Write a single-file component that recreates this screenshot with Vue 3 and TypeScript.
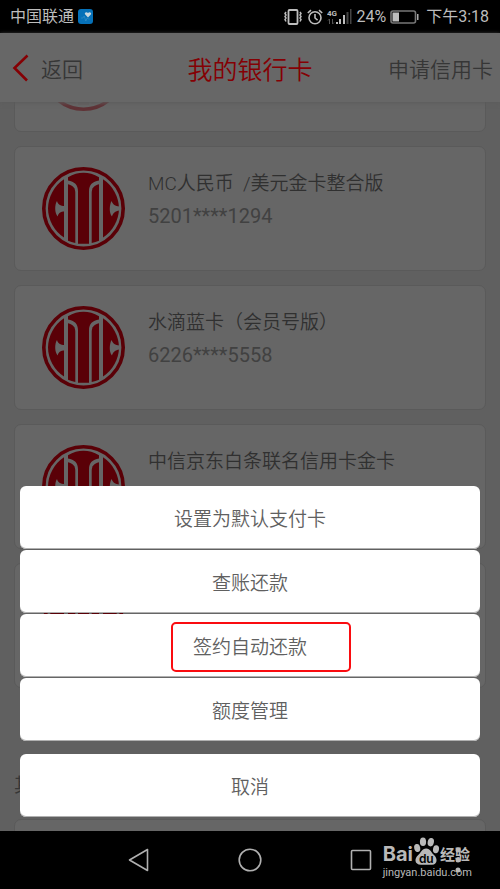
<script setup lang="ts">
interface BankCard {
  id: number
  name: string
  number: string
  faded?: boolean
}

const cards: BankCard[] = [
  { id: 1, name: '', number: '', faded: true },
  { id: 2, name: 'MC人民币  /美元金卡整合版', number: '5201****1294' },
  { id: 3, name: '水滴蓝卡（会员号版）', number: '6226****5558' },
  { id: 4, name: '中信京东白条联名信用卡金卡', number: '' },
  { id: 5, name: '', number: '' },
]

const actions: string[] = ['设置为默认支付卡', '查账还款', '签约自动还款', '额度管理']
const highlighted = '签约自动还款'
</script>

<template>
  <div class="phone">
    <div class="status">
      <span class="carrier">中国联通</span>
      <svg class="health" width="15" height="15" viewBox="0 0 15 15" aria-hidden="true">
        <rect width="15" height="15" rx="3" fill="#0671b8" />
        <path d="M10 8.400 7.200 5.600C5.800 3.800 8.400 2.200 10 4c1.500-1.800 4.100-.2 2.800 1.600Z" fill="#c9d8e0" />
        <path d="M3 9h2l1.200-2 1.600 5 1.400-3 1 1h1.500" fill="none" stroke="#3c93c8" stroke-width=".6" />
      </svg>
      <div class="indicators">
        <svg width="20" height="16" viewBox="0 0 20 16" fill="none" stroke="#bdbdbd" aria-hidden="true">
          <rect x="5.500" y="1" width="9" height="14" rx="1" stroke-width="1.800" />
          <path d="M3 3 2 4.500 3 6 2 7.500 3 9 2 10.500 3 12.500M17 3l1 1.500L17 6l1 1.500L17 9l1 1.500-1 2" stroke-width="1.500" />
        </svg>
        <svg class="alarm" width="16" height="16" viewBox="0 0 16 16" fill="none" stroke="#bdbdbd" stroke-width="1.600" aria-hidden="true">
          <circle cx="8" cy="8.800" r="6" />
          <path d="M8 5v4l2.600 2.200M.8 4 4 1.200M15.200 4 12 1.200" />
        </svg>
        <svg class="signal" width="25" height="17" viewBox="0 0 25 17" aria-hidden="true">
          <text x="0" y="8" font-family="Roboto, sans-serif" font-size="8" font-weight="700" fill="#bdbdbd">4G</text>
          <path d="M2.500 11v5M1 12.500 2.500 11M5.500 11v5L7 14.500" fill="none" stroke="#555" />
          <path d="M9 14h2v2H9zM12 11h2v5h-2zM16 7h2v9h-2z" fill="#bdbdbd" />
          <path d="M19.500 4h2v12h-2zM23 1h1.500v15H23z" fill="#444" />
        </svg>
        <span class="percent">24%</span>
        <svg class="battery" width="29" height="14" viewBox="0 0 29 14" aria-hidden="true">
          <rect x="1" y="1" width="24.500" height="12" rx="2" fill="none" stroke="#777" stroke-width="1.600" />
          <rect x="2.500" y="2.500" width="6.500" height="9" fill="#bdbdbd" />
          <path d="M27 4h1.500v6H27z" fill="#aaa" />
        </svg>
        <span class="time">下午3:18</span>
      </div>
    </div>

    <main class="screen">
      <header class="header">
        <a class="back" href="#">
          <svg width="17" height="28" viewBox="0 0 17 28" aria-hidden="true">
            <path d="M15.500 1.500 2.500 14 15 26.500" fill="none" stroke="#850004" stroke-width="2.600" />
          </svg>
          <span>返回</span>
        </a>
        <h1>我的银行卡</h1>
        <a class="apply" href="#">申请信用卡</a>
      </header>

      <div class="viewport">
        <div class="list">
          <article v-for="card in cards" :key="card.id" class="card">
            <svg class="logo" :class="{ faded: card.faded }" width="83" height="83" viewBox="0 0 83 83" aria-hidden="true">
              <circle cx="41.500" cy="41.500" r="39.700" fill="none" stroke="#5a0007" stroke-width="3.600" />
              <g fill="#5a0007">
                <path d="M22 12.300V70.500A35.500 35.500 0 0 1 6 41.500 35.500 35.500 0 0 1 22 12.300Z" />
                <path d="M61 12.300V70.500A35.500 35.500 0 0 0 77 41.500 35.500 35.500 0 0 0 61 12.300Z" />
                <path d="M26 17.200C31 18.300 33.300 21 33.300 26V76Q29.500 75.300 26 73.700Z" />
                <path d="M57 17.200C52 18.300 49.700 21 49.700 26V76Q53.500 75.300 57 73.700Z" />
                <path d="M26 10.200Q41.500 1.500 57 10.200V13.600C50.500 14.500 47 18 47 24.500V76.700H36V24.500C36 18 32.500 14.500 26 13.600Z" />
              </g>
              <path d="M15 34C16 37.500 18 39 23 39V44.500C18 44.500 16.500 46 15.800 49.500 12.500 46.500 12.500 37.500 15 34ZM69.500 34C71 37.500 73 39 77.500 39.500V43.500C73 44 71 46 70 49.500 66.800 46 67.500 37.500 69.500 34Z" fill="#666" />
            </svg>
            <div class="info">
              <h2>{{ card.name }}</h2>
              <p>{{ card.number }}</p>
            </div>
          </article>
        </div>
        <p class="footnote">其他银行卡</p>
        <div class="card next"></div>
      </div>

      <div class="sheet">
        <button v-for="action in actions" :key="action" type="button" class="action">
          {{ action }}
          <span v-if="action === highlighted" class="mark"></span>
        </button>
        <button type="button" class="action cancel">取消</button>
      </div>
    </main>

    <nav class="nav">
      <div class="keys">
        <button type="button" aria-label="Back">
          <svg width="24" height="26" viewBox="0 0 24 26"><path d="M20.500 2.500V23.500L2.500 13Z" /></svg>
        </button>
        <button type="button" aria-label="Home">
          <svg width="24" height="26" viewBox="0 0 24 26"><circle cx="12" cy="13" r="10.800" /></svg>
        </button>
        <button type="button" aria-label="Recent">
          <svg width="24" height="26" viewBox="0 0 24 26"><rect x="2.500" y="3.500" width="19" height="19" rx="1" /></svg>
        </button>
      </div>
      <button type="button" aria-label="Menu">
        <svg class="dots" width="24" height="26" viewBox="0 0 24 26">
          <circle cx="12" cy="3" r="2.500" /><circle cx="12" cy="13" r="2.500" /><circle cx="12" cy="23" r="2.500" />
        </svg>
      </button>
      <div class="watermark">
        <div class="brand">
          <b>Bai</b>
          <svg width="27" height="28" viewBox="0 0 27 28" aria-hidden="true">
            <g fill="#b9b9b9">
              <ellipse cx="4.200" cy="11" rx="3" ry="4" transform="rotate(-12 4.200 11)" />
              <ellipse cx="10" cy="4.800" rx="3.100" ry="4.300" />
              <ellipse cx="17.800" cy="5.200" rx="3.100" ry="4.200" transform="rotate(12 17.800 5.200)" />
              <ellipse cx="23" cy="12.300" rx="3" ry="4" transform="rotate(10 23 12.300)" />
              <path d="M13.200 11.500C17.500 11.500 18 15.500 21 18 24.500 21 25 27.500 19 27.800H8C1 27.500 1.500 21 5 18.200 8 16 8.800 11.500 13.200 11.500Z" />
            </g>
            <text x="13.300" y="25.500" text-anchor="middle" font-family="Inter, sans-serif" font-size="12" font-weight="600" fill="#000">du</text>
          </svg>
          <span>经验</span>
        </div>
        <div class="url">jingyan.baidu.com</div>
      </div>
    </nav>
  </div>
</template>

<style>
body {
  margin: 0;
  background: #000;
}
</style>

<style scoped>
.phone {
  display: flex;
  flex-direction: column;
  height: 100vh;
  font-family: Roboto, "Noto Sans CJK SC", sans-serif;
  color: #363636;
}
h1, h2, p {
  margin: 0;
  font-weight: 400;
}
button {
  padding: 0;
  border: 0;
  font-family: inherit;
  cursor: pointer;
}
a {
  color: inherit;
  text-decoration: none;
}
.status {
  display: flex;
  align-items: center;
  flex: none;
  height: 33px;
  padding: 0 11px 0 10px;
  background: #000;
  color: #bdbdbd;
  font-size: 16px;
  line-height: 24px;
}
.health {
  margin-left: 4px;
}
.indicators {
  display: flex;
  align-items: center;
  gap: 4px;
  margin-left: auto;
}
.time {
  margin-left: 3px;
}
.screen {
  position: relative;
  display: flex;
  flex-direction: column;
  flex: 1;
  min-height: 0;
  background: #606060;
}
.header {
  position: relative;
  z-index: 1;
  display: grid;
  grid-template-columns: 1fr auto 1fr;
  align-items: center;
  flex: none;
  height: 69px;
  padding: 0 12px;
  box-sizing: border-box;
  background: #676767;
  box-shadow: 0 1px 4px #5c5c5c;
  font-size: 21px;
  font-weight: 350;
}
.header h1 {
  color: #850004;
  font-size: 25px;
  font-weight: 350;
}
.back {
  display: flex;
  align-items: center;
  gap: 12px;
}
.apply {
  margin-right: -5px;
  text-align: right;
}
.viewport {
  flex: 1;
  min-height: 0;
  overflow: hidden;
  padding: 0 14px;
}
.list {
  display: flex;
  flex-direction: column;
  gap: 14px;
  margin-top: -95px;
}
.card {
  display: flex;
  gap: 23px;
  height: 125px;
  padding: 20px 27px;
  box-sizing: border-box;
  border: 1px solid #5a5a5a;
  border-radius: 7px;
  background: #666;
}
.logo {
  flex: none;
}
.faded {
  opacity: 0.5;
}
.faded g {
  opacity: 0.1;
}
.info h2 {
  min-height: 33px;
  color: #303030;
  font-size: 19px;
  font-weight: 350;
  line-height: 33px;
  white-space: pre;
}
.info p {
  color: #414141;
  font-size: 20px;
  line-height: 33px;
}
.footnote {
  padding: 81px 0 16px;
  font-size: 19px;
  line-height: 34px;
}
.sheet {
  position: absolute;
  z-index: 2;
  right: 20px;
  bottom: 14px;
  left: 20px;
  display: flex;
  flex-direction: column;
  gap: 1px;
}
.action {
  position: relative;
  height: 63px;
  border-radius: 6px;
  background: #fff;
  box-shadow: inset 0 -1px #b0b0b0;
  color: #606060;
  font-size: 19px;
  font-weight: 350;
}
.cancel {
  margin-top: 12px;
}
.mark {
  position: absolute;
  top: 8px;
  left: calc(50% - 79px);
  width: 180px;
  height: 50px;
  box-sizing: border-box;
  border: 2px solid #fa0c10;
  border-radius: 5px;
}
.nav {
  position: relative;
  display: flex;
  align-items: center;
  justify-content: space-between;
  flex: none;
  height: 58px;
  padding: 0 30px 0 127px;
  background: #000;
}
.keys {
  display: flex;
  gap: 87px;
}
.nav button {
  display: flex;
  background: none;
}
.nav button svg {
  fill: none;
  stroke: #b0b0b0;
  stroke-width: 1.6px;
  stroke-linejoin: round;
}
.nav button .dots {
  fill: #b9b9b9;
  stroke: none;
}
.watermark {
  position: absolute;
  right: 28px;
  bottom: 8px;
  color: #b9b9b9;
}
.brand {
  display: flex;
  align-items: flex-end;
}
.brand b {
  font-family: Inter, sans-serif;
  font-size: 20px;
  line-height: 22px;
}
.brand span {
  font-size: 15px;
  font-weight: 700;
  line-height: 20px;
}
.url {
  font-size: 11px;
  line-height: 16px;
}
</style>
